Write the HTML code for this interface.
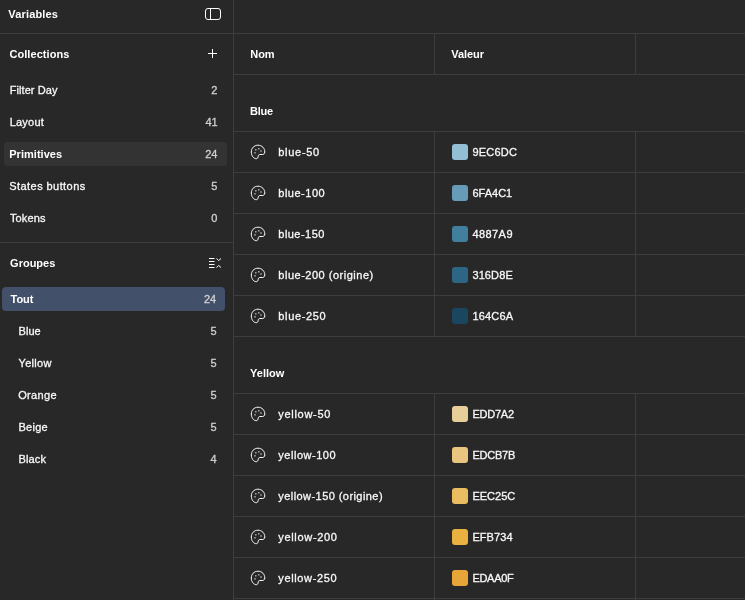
<!DOCTYPE html>
<html><head><meta charset="utf-8">
<style>
*{margin:0;padding:0;box-sizing:border-box}
html,body{width:745px;height:600px;overflow:hidden;background:#282828}
body{position:relative;font-family:"Liberation Sans",sans-serif;font-size:11px;color:#fff}
.t{position:absolute;white-space:nowrap;line-height:32px;height:32px;-webkit-text-stroke:0.3px currentColor}
.L{position:absolute;left:0;top:0;width:745px;height:600px;will-change:transform}
.b{font-weight:bold;-webkit-text-stroke:0}
.hl{position:absolute;height:1px;background:#3d3d3d}
.vl{position:absolute;width:1px;background:#3d3d3d}
.box{position:absolute;border-radius:3px}
.sw{position:absolute;width:16px;height:16px;border-radius:3px;left:452px}
.ic{position:absolute;left:246px;width:24px;height:20px}
</style></head><body>
<div class="vl" style="left:233px;top:0px;height:600px"></div>
<div class="hl" style="left:0px;top:33px;width:745px"></div>
<div class="hl" style="left:0px;top:242px;width:233px"></div>
<div class="hl" style="left:234px;top:74px;width:511px"></div>
<div class="vl" style="left:434px;top:34px;height:40px"></div>
<div class="vl" style="left:635px;top:34px;height:40px"></div>
<div class="hl" style="left:234px;top:131px;width:511px"></div>
<div class="hl" style="left:234px;top:393px;width:511px"></div>
<div class="vl" style="left:434px;top:132px;height:204px"></div>
<div class="vl" style="left:635px;top:132px;height:204px"></div>
<div class="vl" style="left:434px;top:394px;height:206px"></div>
<div class="vl" style="left:635px;top:394px;height:206px"></div>
<div class="hl" style="left:234px;top:172px;width:511px"></div>
<div class="hl" style="left:234px;top:213px;width:511px"></div>
<div class="hl" style="left:234px;top:254px;width:511px"></div>
<div class="hl" style="left:234px;top:295px;width:511px"></div>
<div class="hl" style="left:234px;top:336px;width:511px"></div>
<div class="hl" style="left:234px;top:434px;width:511px"></div>
<div class="hl" style="left:234px;top:475px;width:511px"></div>
<div class="hl" style="left:234px;top:516px;width:511px"></div>
<div class="hl" style="left:234px;top:557px;width:511px"></div>
<div class="hl" style="left:234px;top:598px;width:511px"></div>

<div class="box" style="left:4px;top:142px;width:223px;height:24px;background:#333333"></div>
<div class="box" style="left:2px;top:287px;width:223px;height:24px;background:#42506a;border-radius:4px"></div>


<svg style="position:absolute;left:200px;top:4px" width="26" height="20" viewBox="0 0 26 20"><rect x="5.5" y="4.5" width="15" height="11" rx="2.5" fill="none" stroke="#fff" stroke-width="1"/><line x1="10.5" y1="4.5" x2="10.5" y2="15.5" stroke="#fff" stroke-width="1"/></svg>
<svg style="position:absolute;left:204px;top:45px" width="17" height="17" viewBox="0 0 17 17"><path d="M4 8.5H13M8.5 4V13" stroke="#fff" stroke-width="1"/></svg>
<svg style="position:absolute;left:205px;top:254px" width="20" height="18" viewBox="0 0 20 18"><path d="M4 4.5H9.5M4 7.5H9.5M4 10.5H9.5M4 13.5H9.5" stroke="#fff" stroke-width="1"/><path d="M11.5 4.5L13.7 6.5L16 4.5M11.5 13.5L13.7 11.5L16 13.5" stroke="#fff" stroke-width="1" fill="none"/></svg>

<svg class="ic" style="top:142px" width="24" height="20" viewBox="0 0 24 20"><path d="M10.3 16.7C7.5 16.7 5.3 13.5 5.3 10C5.3 6.3 8 3.2 12 3.2C16 3.2 18.8 6.3 18.8 10C18.8 11.5 17.8 12.5 16.3 12.5L14 12.5C12.8 12.5 12.3 13.3 12.2 14.3C12 15.8 11.5 16.7 10.3 16.7Z" fill="none" stroke="#fff" stroke-width="1"/><rect x="9.1" y="7.1" width="1.4" height="1.4" fill="#bbb"/><rect x="12.1" y="6.1" width="1.4" height="1.4" fill="#bbb"/><rect x="14.3" y="8.3" width="1.4" height="1.4" fill="#bbb"/><rect x="8.3" y="10.1" width="1.4" height="1.4" fill="#bbb"/></svg>
<div class="sw" style="top:144px;background:#93bfd5"></div>
<svg class="ic" style="top:183px" width="24" height="20" viewBox="0 0 24 20"><path d="M10.3 16.7C7.5 16.7 5.3 13.5 5.3 10C5.3 6.3 8 3.2 12 3.2C16 3.2 18.8 6.3 18.8 10C18.8 11.5 17.8 12.5 16.3 12.5L14 12.5C12.8 12.5 12.3 13.3 12.2 14.3C12 15.8 11.5 16.7 10.3 16.7Z" fill="none" stroke="#fff" stroke-width="1"/><rect x="9.1" y="7.1" width="1.4" height="1.4" fill="#bbb"/><rect x="12.1" y="6.1" width="1.4" height="1.4" fill="#bbb"/><rect x="14.3" y="8.3" width="1.4" height="1.4" fill="#bbb"/><rect x="8.3" y="10.1" width="1.4" height="1.4" fill="#bbb"/></svg>
<div class="sw" style="top:185px;background:#679cb9"></div>
<svg class="ic" style="top:224px" width="24" height="20" viewBox="0 0 24 20"><path d="M10.3 16.7C7.5 16.7 5.3 13.5 5.3 10C5.3 6.3 8 3.2 12 3.2C16 3.2 18.8 6.3 18.8 10C18.8 11.5 17.8 12.5 16.3 12.5L14 12.5C12.8 12.5 12.3 13.3 12.2 14.3C12 15.8 11.5 16.7 10.3 16.7Z" fill="none" stroke="#fff" stroke-width="1"/><rect x="9.1" y="7.1" width="1.4" height="1.4" fill="#bbb"/><rect x="12.1" y="6.1" width="1.4" height="1.4" fill="#bbb"/><rect x="14.3" y="8.3" width="1.4" height="1.4" fill="#bbb"/><rect x="8.3" y="10.1" width="1.4" height="1.4" fill="#bbb"/></svg>
<div class="sw" style="top:226px;background:#427f9e"></div>
<svg class="ic" style="top:265px" width="24" height="20" viewBox="0 0 24 20"><path d="M10.3 16.7C7.5 16.7 5.3 13.5 5.3 10C5.3 6.3 8 3.2 12 3.2C16 3.2 18.8 6.3 18.8 10C18.8 11.5 17.8 12.5 16.3 12.5L14 12.5C12.8 12.5 12.3 13.3 12.2 14.3C12 15.8 11.5 16.7 10.3 16.7Z" fill="none" stroke="#fff" stroke-width="1"/><rect x="9.1" y="7.1" width="1.4" height="1.4" fill="#bbb"/><rect x="12.1" y="6.1" width="1.4" height="1.4" fill="#bbb"/><rect x="14.3" y="8.3" width="1.4" height="1.4" fill="#bbb"/><rect x="8.3" y="10.1" width="1.4" height="1.4" fill="#bbb"/></svg>
<div class="sw" style="top:267px;background:#2d6684"></div>
<svg class="ic" style="top:306px" width="24" height="20" viewBox="0 0 24 20"><path d="M10.3 16.7C7.5 16.7 5.3 13.5 5.3 10C5.3 6.3 8 3.2 12 3.2C16 3.2 18.8 6.3 18.8 10C18.8 11.5 17.8 12.5 16.3 12.5L14 12.5C12.8 12.5 12.3 13.3 12.2 14.3C12 15.8 11.5 16.7 10.3 16.7Z" fill="none" stroke="#fff" stroke-width="1"/><rect x="9.1" y="7.1" width="1.4" height="1.4" fill="#bbb"/><rect x="12.1" y="6.1" width="1.4" height="1.4" fill="#bbb"/><rect x="14.3" y="8.3" width="1.4" height="1.4" fill="#bbb"/><rect x="8.3" y="10.1" width="1.4" height="1.4" fill="#bbb"/></svg>
<div class="sw" style="top:308px;background:#1a4660"></div>
<svg class="ic" style="top:404px" width="24" height="20" viewBox="0 0 24 20"><path d="M10.3 16.7C7.5 16.7 5.3 13.5 5.3 10C5.3 6.3 8 3.2 12 3.2C16 3.2 18.8 6.3 18.8 10C18.8 11.5 17.8 12.5 16.3 12.5L14 12.5C12.8 12.5 12.3 13.3 12.2 14.3C12 15.8 11.5 16.7 10.3 16.7Z" fill="none" stroke="#fff" stroke-width="1"/><rect x="9.1" y="7.1" width="1.4" height="1.4" fill="#bbb"/><rect x="12.1" y="6.1" width="1.4" height="1.4" fill="#bbb"/><rect x="14.3" y="8.3" width="1.4" height="1.4" fill="#bbb"/><rect x="8.3" y="10.1" width="1.4" height="1.4" fill="#bbb"/></svg>
<div class="sw" style="top:406px;background:#e8cf9a"></div>
<svg class="ic" style="top:445px" width="24" height="20" viewBox="0 0 24 20"><path d="M10.3 16.7C7.5 16.7 5.3 13.5 5.3 10C5.3 6.3 8 3.2 12 3.2C16 3.2 18.8 6.3 18.8 10C18.8 11.5 17.8 12.5 16.3 12.5L14 12.5C12.8 12.5 12.3 13.3 12.2 14.3C12 15.8 11.5 16.7 10.3 16.7Z" fill="none" stroke="#fff" stroke-width="1"/><rect x="9.1" y="7.1" width="1.4" height="1.4" fill="#bbb"/><rect x="12.1" y="6.1" width="1.4" height="1.4" fill="#bbb"/><rect x="14.3" y="8.3" width="1.4" height="1.4" fill="#bbb"/><rect x="8.3" y="10.1" width="1.4" height="1.4" fill="#bbb"/></svg>
<div class="sw" style="top:447px;background:#e9c67f"></div>
<svg class="ic" style="top:486px" width="24" height="20" viewBox="0 0 24 20"><path d="M10.3 16.7C7.5 16.7 5.3 13.5 5.3 10C5.3 6.3 8 3.2 12 3.2C16 3.2 18.8 6.3 18.8 10C18.8 11.5 17.8 12.5 16.3 12.5L14 12.5C12.8 12.5 12.3 13.3 12.2 14.3C12 15.8 11.5 16.7 10.3 16.7Z" fill="none" stroke="#fff" stroke-width="1"/><rect x="9.1" y="7.1" width="1.4" height="1.4" fill="#bbb"/><rect x="12.1" y="6.1" width="1.4" height="1.4" fill="#bbb"/><rect x="14.3" y="8.3" width="1.4" height="1.4" fill="#bbb"/><rect x="8.3" y="10.1" width="1.4" height="1.4" fill="#bbb"/></svg>
<div class="sw" style="top:488px;background:#e9bd60"></div>
<svg class="ic" style="top:527px" width="24" height="20" viewBox="0 0 24 20"><path d="M10.3 16.7C7.5 16.7 5.3 13.5 5.3 10C5.3 6.3 8 3.2 12 3.2C16 3.2 18.8 6.3 18.8 10C18.8 11.5 17.8 12.5 16.3 12.5L14 12.5C12.8 12.5 12.3 13.3 12.2 14.3C12 15.8 11.5 16.7 10.3 16.7Z" fill="none" stroke="#fff" stroke-width="1"/><rect x="9.1" y="7.1" width="1.4" height="1.4" fill="#bbb"/><rect x="12.1" y="6.1" width="1.4" height="1.4" fill="#bbb"/><rect x="14.3" y="8.3" width="1.4" height="1.4" fill="#bbb"/><rect x="8.3" y="10.1" width="1.4" height="1.4" fill="#bbb"/></svg>
<div class="sw" style="top:529px;background:#eab040"></div>
<svg class="ic" style="top:568px" width="24" height="20" viewBox="0 0 24 20"><path d="M10.3 16.7C7.5 16.7 5.3 13.5 5.3 10C5.3 6.3 8 3.2 12 3.2C16 3.2 18.8 6.3 18.8 10C18.8 11.5 17.8 12.5 16.3 12.5L14 12.5C12.8 12.5 12.3 13.3 12.2 14.3C12 15.8 11.5 16.7 10.3 16.7Z" fill="none" stroke="#fff" stroke-width="1"/><rect x="9.1" y="7.1" width="1.4" height="1.4" fill="#bbb"/><rect x="12.1" y="6.1" width="1.4" height="1.4" fill="#bbb"/><rect x="14.3" y="8.3" width="1.4" height="1.4" fill="#bbb"/><rect x="8.3" y="10.1" width="1.4" height="1.4" fill="#bbb"/></svg>
<div class="sw" style="top:570px;background:#e8a538"></div>
<div class="L">
<div class="t b" style="left:8.30px;top:-2px;letter-spacing:0.163px;color:#fff">Variables</div>
<div class="t b" style="left:9.45px;top:38px;letter-spacing:0.068px;color:#fff">Collections</div>
<div class="t" style="left:9.66px;top:74px;letter-spacing:0.086px;color:#f8f8f8">Filter Day</div>
<div class="t" style="left:9.66px;top:106px;letter-spacing:0.234px;color:#f8f8f8">Layout</div>
<div class="t b" style="left:9.20px;top:138px;letter-spacing:0.037px;color:#fff">Primitives</div>
<div class="t" style="left:9.30px;top:170px;letter-spacing:0.429px;color:#f8f8f8">States buttons</div>
<div class="t" style="left:10.00px;top:202px;letter-spacing:0.109px;color:#f8f8f8">Tokens</div>
<div class="t b" style="left:10.10px;top:247px;letter-spacing:-0.002px;color:#fff">Groupes</div>
<div class="t b" style="left:10.50px;top:283px;letter-spacing:-0.014px;color:#fff">Tout</div>
<div class="t" style="left:18.50px;top:315px;letter-spacing:0.067px;color:#f8f8f8">Blue</div>
<div class="t" style="left:18.50px;top:347px;letter-spacing:0.310px;color:#f8f8f8">Yellow</div>
<div class="t" style="left:18.20px;top:379px;letter-spacing:0.326px;color:#f8f8f8">Orange</div>
<div class="t" style="left:18.50px;top:411px;letter-spacing:0.246px;color:#f8f8f8">Beige</div>
<div class="t" style="left:18.50px;top:443px;letter-spacing:0.125px;color:#f8f8f8">Black</div>
<div class="t" style="left:211.30px;top:74px;color:#d0d0d0">2</div>
<div class="t" style="left:205.38px;top:106px;color:#d0d0d0">41</div>
<div class="t" style="left:205.18px;top:138px;color:#d0d0d0">24</div>
<div class="t" style="left:211.30px;top:170px;color:#d0d0d0">5</div>
<div class="t" style="left:211.30px;top:202px;color:#d0d0d0">0</div>
<div class="t" style="left:203.88px;top:283px;color:#d0d0d0">24</div>
<div class="t" style="left:210.50px;top:315px;color:#d0d0d0">5</div>
<div class="t" style="left:210.50px;top:347px;color:#d0d0d0">5</div>
<div class="t" style="left:210.50px;top:379px;color:#d0d0d0">5</div>
<div class="t" style="left:210.50px;top:411px;color:#d0d0d0">5</div>
<div class="t" style="left:210.50px;top:443px;color:#d0d0d0">4</div>
<div class="t b" style="left:250.30px;top:38px;letter-spacing:-0.082px;color:#fff">Nom</div>
<div class="t b" style="left:451.30px;top:38px;letter-spacing:-0.068px;color:#fff">Valeur</div>
<div class="t b" style="left:250.10px;top:95px;letter-spacing:-0.273px;color:#fff">Blue</div>
<div class="t b" style="left:250.10px;top:357px;letter-spacing:-0.016px;color:#fff">Yellow</div>
<div class="t" style="left:278.30px;top:136px;letter-spacing:0.704px;color:#f8f8f8">blue-50</div>
<div class="t" style="left:472.40px;top:136px;letter-spacing:0.208px;color:#f8f8f8">9EC6DC</div>
<div class="t" style="left:278.30px;top:177px;letter-spacing:0.501px;color:#f8f8f8">blue-100</div>
<div class="t" style="left:472.40px;top:177px;letter-spacing:0.014px;color:#f8f8f8">6FA4C1</div>
<div class="t" style="left:278.30px;top:218px;letter-spacing:0.465px;color:#f8f8f8">blue-150</div>
<div class="t" style="left:472.40px;top:218px;letter-spacing:0.438px;color:#f8f8f8">4887A9</div>
<div class="t" style="left:278.30px;top:259px;letter-spacing:0.514px;color:#f8f8f8">blue-200 (origine)</div>
<div class="t" style="left:472.40px;top:259px;letter-spacing:0.117px;color:#f8f8f8">316D8E</div>
<div class="t" style="left:278.30px;top:300px;letter-spacing:0.644px;color:#f8f8f8">blue-250</div>
<div class="t" style="left:472.40px;top:300px;letter-spacing:0.177px;color:#f8f8f8">164C6A</div>
<div class="t" style="left:278.30px;top:398px;letter-spacing:0.694px;color:#f8f8f8">yellow-50</div>
<div class="t" style="left:472.40px;top:398px;letter-spacing:-0.216px;color:#f8f8f8">EDD7A2</div>
<div class="t" style="left:278.30px;top:439px;letter-spacing:0.526px;color:#f8f8f8">yellow-100</div>
<div class="t" style="left:472.40px;top:439px;letter-spacing:-0.236px;color:#f8f8f8">EDCB7B</div>
<div class="t" style="left:278.30px;top:480px;letter-spacing:0.436px;color:#f8f8f8">yellow-150 (origine)</div>
<div class="t" style="left:472.40px;top:480px;letter-spacing:0.009px;color:#f8f8f8">EEC25C</div>
<div class="t" style="left:278.30px;top:521px;letter-spacing:0.671px;color:#f8f8f8">yellow-200</div>
<div class="t" style="left:472.40px;top:521px;letter-spacing:0.074px;color:#f8f8f8">EFB734</div>
<div class="t" style="left:278.30px;top:562px;letter-spacing:0.637px;color:#f8f8f8">yellow-250</div>
<div class="t" style="left:472.40px;top:562px;letter-spacing:-0.294px;color:#f8f8f8">EDAA0F</div>
</div>
</body></html>
